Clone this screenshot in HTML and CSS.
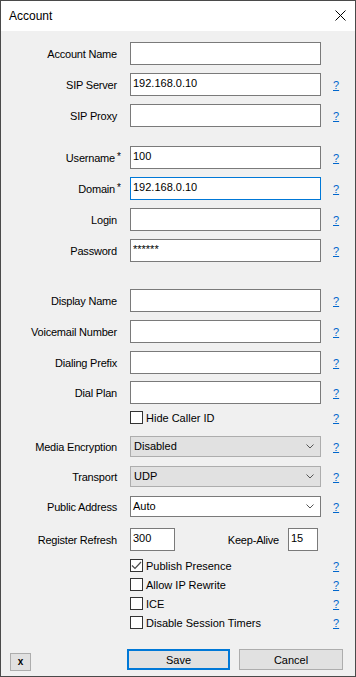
FILE: index.html
```html
<!DOCTYPE html>
<html lang="en">
<head>
    <meta charset="UTF-8">
    <meta name="viewport" content="width=device-width, initial-scale=1.0">
    <title>Account</title>
    <link rel="stylesheet" href="styles.css">
</head>
<body>
    <div class="window">
        <div class="titlebar">
            <span class="title">Account</span>
            <svg class="close" width="11" height="11" viewBox="0 0 11 11">
                <path d="M0.5 0.5 L10.5 10.5 M10.5 0.5 L0.5 10.5" stroke="#000" stroke-width="1" fill="none"/>
            </svg>
        </div>

        <div class="form">
            <div class="row first">
                <label class="lbl">Account Name</label>
                <input class="field" type="text" value="">
            </div>
            <div class="row">
                <label class="lbl">SIP Server</label>
                <input class="field" type="text" value="192.168.0.10">
                <a class="help" href="#">?</a>
            </div>
            <div class="row">
                <label class="lbl">SIP Proxy</label>
                <input class="field" type="text" value="">
                <a class="help" href="#">?</a>
            </div>

            <!-- login -->
            <div class="row group">
                <label class="lbl">Username<span class="req">*</span></label>
                <input class="field" type="text" value="100">
                <a class="help" href="#">?</a>
            </div>
            <div class="row">
                <label class="lbl">Domain<span class="req">*</span></label>
                <input class="field focused" type="text" value="192.168.0.10">
                <a class="help" href="#">?</a>
            </div>
            <div class="row">
                <label class="lbl">Login</label>
                <input class="field" type="text" value="">
                <a class="help" href="#">?</a>
            </div>
            <div class="row">
                <label class="lbl">Password</label>
                <input class="field" type="text" value="******">
                <a class="help" href="#">?</a>
            </div>

            <!-- optional -->
            <div class="row section">
                <label class="lbl">Display Name</label>
                <input class="field" type="text" value="">
                <a class="help" href="#">?</a>
            </div>
            <div class="row">
                <label class="lbl">Voicemail Number</label>
                <input class="field" type="text" value="">
                <a class="help" href="#">?</a>
            </div>
            <div class="row">
                <label class="lbl">Dialing Prefix</label>
                <input class="field" type="text" value="">
                <a class="help" href="#">?</a>
            </div>
            <div class="row tight">
                <label class="lbl">Dial Plan</label>
                <input class="field" type="text" value="">
                <a class="help" href="#">?</a>
            </div>
            <div class="row check hide-id">
                <span class="lbl"></span>
                <label class="field check-field"><span class="box"></span>Hide Caller ID</label>
                <a class="help" href="#">?</a>
            </div>

            <!-- network -->
            <div class="row combo-row">
                <label class="lbl">Media Encryption</label>
                <div class="field combo">
                    <span class="combo-text">Disabled</span>
                    <svg width="8" height="5" viewBox="0 0 8 5"><path d="M0.5 0.5 L4 4 L7.5 0.5" stroke="#555" fill="none"/></svg>
                </div>
                <a class="help" href="#">?</a>
            </div>
            <div class="row combo-row">
                <label class="lbl">Transport</label>
                <div class="field combo">
                    <span class="combo-text">UDP</span>
                    <svg width="8" height="5" viewBox="0 0 8 5"><path d="M0.5 0.5 L4 4 L7.5 0.5" stroke="#555" fill="none"/></svg>
                </div>
                <a class="help" href="#">?</a>
            </div>
            <div class="row combo-row">
                <label class="lbl">Public Address</label>
                <div class="field combo editable">
                    <span class="combo-text">Auto</span>
                    <svg width="8" height="5" viewBox="0 0 8 5"><path d="M0.5 0.5 L4 4 L7.5 0.5" stroke="#555" fill="none"/></svg>
                </div>
                <a class="help" href="#">?</a>
            </div>
            <div class="row refresh">
                <label class="lbl">Register Refresh</label>
                <input class="small-field" type="text" value="300">
                <label class="ka-lbl">Keep-Alive</label>
                <input class="tiny-field" type="text" value="15">
            </div>

            <!-- flags -->
            <div class="row check first-check">
                <span class="lbl"></span>
                <label class="field check-field">
                    <span class="box">
                        <svg width="11" height="11" viewBox="0 0 11 11"><path d="M1 5.5 L4 8.5 L10 2" stroke="#4a4a4a" stroke-width="1.2" fill="none"/></svg>
                    </span>Publish Presence
                </label>
                <a class="help" href="#">?</a>
            </div>
            <div class="row check">
                <span class="lbl"></span>
                <label class="field check-field"><span class="box"></span>Allow IP Rewrite</label>
                <a class="help" href="#">?</a>
            </div>
            <div class="row check">
                <span class="lbl"></span>
                <label class="field check-field"><span class="box"></span>ICE</label>
                <a class="help" href="#">?</a>
            </div>
            <div class="row check">
                <span class="lbl"></span>
                <label class="field check-field"><span class="box"></span>Disable Session Timers</label>
                <a class="help" href="#">?</a>
            </div>

            <div class="buttons">
                <button class="btn btn-x">x</button>
                <button class="btn btn-save">Save</button>
                <button class="btn btn-cancel">Cancel</button>
            </div>
        </div>
    </div>
</body>
</html>
```

FILE: styles.css
```css
/* Dialog window */
body {
    margin: 0;
    font-family: "Liberation Sans", Arial, sans-serif;
    font-size: 11px;
    color: #000;
}

.window {
    width: 356px;
    height: 677px;
    box-sizing: border-box;
    border: 1px solid #4a4a4a;
    background: #f0f0f0;
}

.titlebar {
    height: 30px;
    background: #fff;
    display: flex;
    align-items: center;
    justify-content: space-between;
    padding: 0 9px 0 8px;
}

.title {
    font-size: 12px;
}

.close {
    display: block;
    margin-top: -1px;
}

/* Form rows */
.form {
    padding-top: 11px;
}

.row {
    display: flex;
    align-items: center;
    height: 23px;
    margin-top: 8px;
}

.row.first { margin-top: 0; }
.row.group { margin-top: 19px; }
.row.section { margin-top: 27px; }
.row.tight { margin-top: 7px; }
.row.refresh { margin-top: 11px; }

.row.combo-row {
    height: 21px;
    margin-top: 9px;
}

.row.check {
    height: 19px;
    margin-top: 0;
}

.row.hide-id { margin-top: 4px; }
.row.first-check { margin-top: 5px; }

.lbl {
    width: 116px;
    margin-right: 13px;
    text-align: right;
    white-space: nowrap;
    letter-spacing: -0.2px;
}

.req {
    display: inline-block;
    width: 0;
    padding-left: 2px;
    font-size: 10px;
    vertical-align: 2px;
}

.field {
    width: 191px;
    height: 23px;
    box-sizing: border-box;
    margin: 0;
    border: 1px solid #7a7a7a;
    background: #fff;
    padding: 0 2px 3px;
    font-family: inherit;
    font-size: 11px;
    color: #000;
    outline: none;
}

.field.focused {
    border-color: #0078d7;
}

.help {
    margin-left: 12px;
    color: #0066cc;
    text-decoration: underline;
    font-size: 11px;
    padding-top: 1px;
}

/* Combo boxes */
.combo {
    height: 21px;
    display: flex;
    align-items: center;
    padding: 0 6px 0 3px;
    background: #e1e1e1;
    border-color: #adadad;
}

.combo.editable {
    background: #fff;
    border-color: #7a7a7a;
    padding-left: 2px;
}

.combo-text {
    flex: 1;
    padding-bottom: 2px;
}

/* Register refresh / keep-alive */
.small-field,
.tiny-field {
    height: 23px;
    box-sizing: border-box;
    margin: 0;
    border: 1px solid #7a7a7a;
    background: #fff;
    padding: 0 2px 3px;
    font-family: inherit;
    font-size: 11px;
    outline: none;
}

.small-field { width: 45px; }
.tiny-field { width: 30px; }

.ka-lbl {
    width: 104px;
    margin-right: 9px;
    text-align: right;
    letter-spacing: -0.2px;
}

/* Checkboxes */
.check-field {
    height: 19px;
    border: none;
    background: none;
    padding: 0;
    display: flex;
    align-items: center;
}

.box {
    width: 13px;
    height: 13px;
    box-sizing: border-box;
    border: 1px solid #333;
    background: #fff;
    margin-right: 3px;
    display: flex;
    align-items: center;
    justify-content: center;
}

.box svg {
    display: block;
}

/* Buttons */
.buttons {
    display: flex;
    align-items: center;
    margin-top: 17px;
    height: 21px;
}

.btn {
    box-sizing: border-box;
    margin: 0;
    background: #e1e1e1;
    border: 1px solid #adadad;
    font-family: inherit;
    font-size: 11px;
    color: #000;
    padding: 0;
}

.btn-x {
    width: 21px;
    height: 18px;
    margin-left: 9px;
    margin-top: 4px;
    font-weight: bold;
    font-size: 10px;
}

.btn-save {
    width: 103px;
    height: 21px;
    margin-left: 96px;
    border: 2px solid #0078d7;
}

.btn-cancel {
    width: 104px;
    height: 21px;
    margin-left: 9px;
}
```
